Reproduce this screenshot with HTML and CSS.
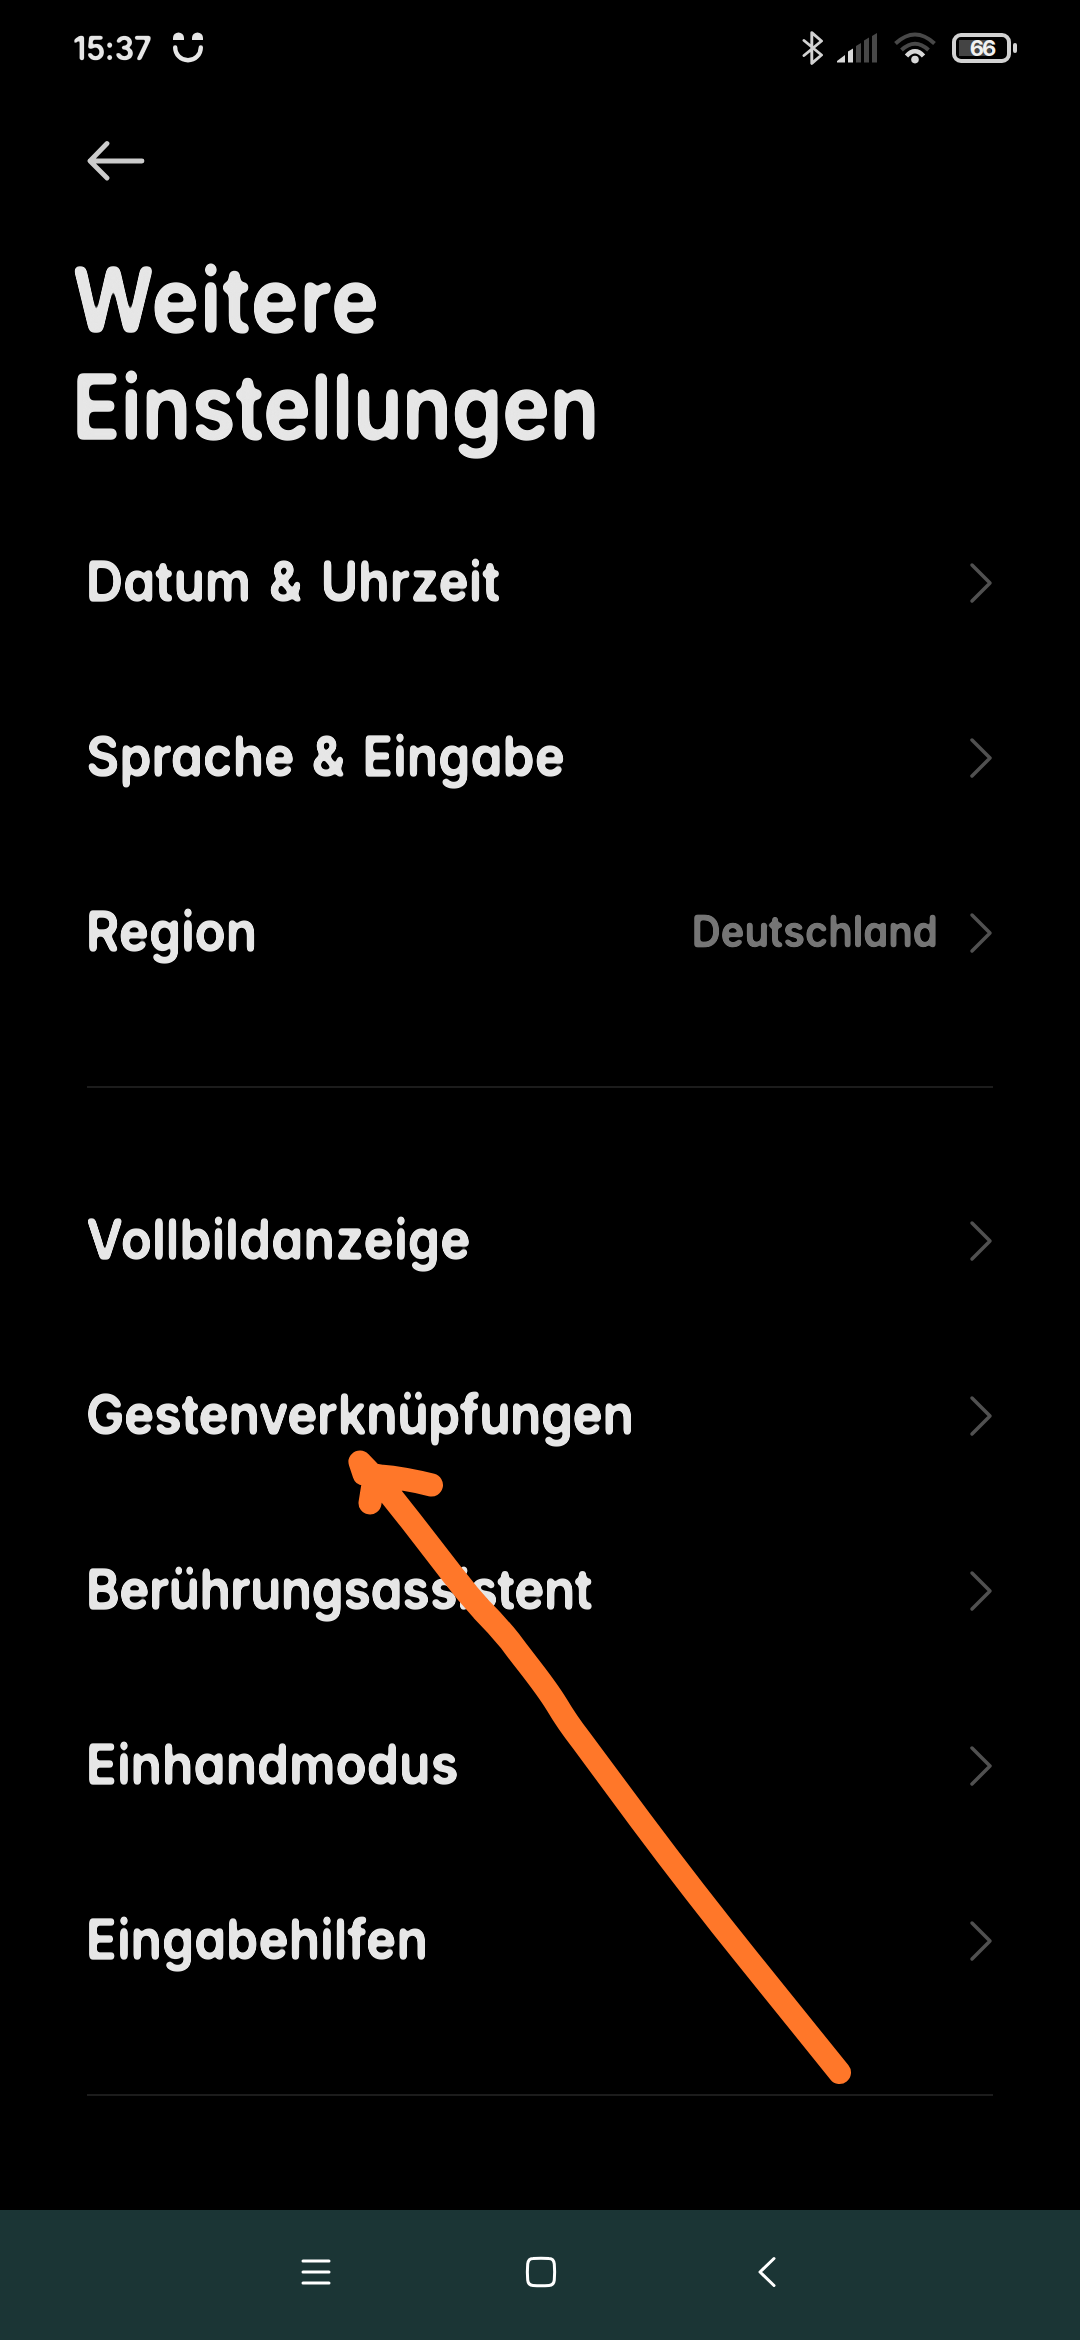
FILE: index.html
```html
<!DOCTYPE html>
<html lang="de">
<head>
<meta charset="utf-8">
<title>Weitere Einstellungen</title>
<link rel="stylesheet" href="styles.css">
</head>
<body>
<!-- Softens the corners of the letters into a rounded typeface -->
<svg class="defs" width="0" height="0">
  <filter id="round-s" color-interpolation-filters="sRGB"><feGaussianBlur stdDeviation="1"/><feComponentTransfer><feFuncA type="linear" slope="3" intercept="-0.8"/></feComponentTransfer></filter>
  <filter id="round-v" color-interpolation-filters="sRGB"><feGaussianBlur stdDeviation="1.5"/><feComponentTransfer><feFuncA type="linear" slope="5" intercept="-1.5"/></feComponentTransfer></filter>
  <filter id="round-m" color-interpolation-filters="sRGB"><feGaussianBlur stdDeviation="1.9"/><feComponentTransfer><feFuncA type="linear" slope="6" intercept="-1.8"/></feComponentTransfer></filter>
  <filter id="round-l" color-interpolation-filters="sRGB"><feGaussianBlur stdDeviation="3"/><feComponentTransfer><feFuncA type="linear" slope="9" intercept="-3.2"/></feComponentTransfer></filter>
</svg>
<div class="screen">
  <header class="status">
    <div class="status-left">
      <span class="time">15:37</span>
      <svg class="smile" width="31" height="31" viewBox="0 0 31 31"><path d="M0 8V6a5.500 5.500 0 0 1 11 0v2zM19 8V6a5.500 5.500 0 0 1 11 0v2z" fill="#e6e6e6"/><path d="M2.200 15.500a12.800 12.800 0 0 0 25.600 0" fill="none" stroke="#e6e6e6" stroke-width="4.400" stroke-linecap="round"/></svg>
    </div>
    <div class="status-right">
      <svg class="bluetooth" width="22" height="34" viewBox="0 0 22 34" fill="none" stroke="#d2d2d2" stroke-width="2.900" stroke-linejoin="round" stroke-linecap="round"><path d="M2 9.500 19.500 24 9.800 32.400V1.600L19.500 10 2 24.500"/></svg>
      <svg class="signal" width="41" height="30" viewBox="0 0 41 30"><path d="M0 29.500V28L8 22V29.500zM11 29.500V18.500L16 15.500V29.500z" fill="#d8d8d8"/><path d="M19 29.500V13L24 10V29.500zM27 29.500V7.500L32 4.500V29.500zM35 29.500V3L40 0V29.500z" fill="#484848"/></svg>
      <svg class="wifi" width="42" height="32" viewBox="0 0 42 32" fill="none" stroke-width="4"><path d="M1.500 11.500Q21-6.500 40.500 11.500M7.500 18Q21 5.500 34.500 18" stroke="#484848"/><path d="M12.500 24Q21 14.500 29.500 24" stroke="#d8d8d8" stroke-width="4.500"/><circle cx="21" cy="27.600" r="3.800" fill="#d8d8d8"/></svg>
      <div class="battery"><span class="battery-level">66</span></div>
      <i class="battery-cap"></i>
    </div>
  </header>

  <svg class="back" width="58" height="42" viewBox="0 0 58 42" fill="none" stroke="#ccc" stroke-width="4.800" stroke-linecap="round" stroke-linejoin="round"><path d="M55 21H3M20 3.500 3 21 20 38"/></svg>
  <h1 class="title"><span class="title-first">Weitere</span><br>Einstellungen</h1>

  <main class="list">
    <section class="group">
      <div class="row"><span class="label datum">Datum &amp; Uhrzeit</span><svg class="chevron" viewBox="0 0 24 42"><path d="M3 3 21 21 3 39"/></svg></div>
      <div class="row"><span class="label sprache">Sprache &amp; Eingabe</span><svg class="chevron" viewBox="0 0 24 42"><path d="M3 3 21 21 3 39"/></svg></div>
      <div class="row"><span class="label region">Region</span><span class="value">Deutschland</span><svg class="chevron" viewBox="0 0 24 42"><path d="M3 3 21 21 3 39"/></svg></div>
    </section>
    <section class="group group-input">
      <div class="row"><span class="label vollbild">Vollbildanzeige</span><svg class="chevron" viewBox="0 0 24 42"><path d="M3 3 21 21 3 39"/></svg></div>
      <div class="row"><span class="label gesten">Gestenverknüpfungen</span><svg class="chevron" viewBox="0 0 24 42"><path d="M3 3 21 21 3 39"/></svg></div>
      <div class="row"><span class="label assistent">Berührungsassistent</span><svg class="chevron" viewBox="0 0 24 42"><path d="M3 3 21 21 3 39"/></svg></div>
      <div class="row"><span class="label einhand">Einhandmodus</span><svg class="chevron" viewBox="0 0 24 42"><path d="M3 3 21 21 3 39"/></svg></div>
      <div class="row"><span class="label hilfen">Eingabehilfen</span><svg class="chevron" viewBox="0 0 24 42"><path d="M3 3 21 21 3 39"/></svg></div>
    </section>
  </main>

  <nav class="nav">
    <svg class="nav-menu" width="30" height="32" viewBox="0 0 30 32" fill="none" stroke="#fff" stroke-width="3" stroke-linecap="round"><path d="M2 5H28M2 16H28M2 27H28"/></svg>
    <svg class="nav-home" width="32" height="32" viewBox="0 0 32 32" fill="none" stroke="#fff" stroke-width="3"><path d="M8 2.500Q16 1.800 24 2.500 28.800 2.700 29.300 8 30 16 29.300 24 28.800 29.300 24 29.500 16 30.200 8 29.500 3.200 29.300 2.700 24 2 16 2.700 8 3.200 2.700 8 2.500z"/></svg>
    <svg class="nav-back" width="20" height="32" viewBox="0 0 20 32" fill="none" stroke="#fff" stroke-width="3" stroke-linecap="round" stroke-linejoin="round"><path d="M17 2.500 3 16 17 29.500"/></svg>
  </nav>

  <svg class="arrow" viewBox="0 0 1080 2340" fill="none" stroke="#ff7729" stroke-width="23" stroke-linecap="round" stroke-linejoin="round"><path d="M839.500 2072.500 748 1959Q694 1892 641 1821L581 1740Q567 1722 557 1705C543 1682 526 1663 510 1641Q497 1625 482 1610L468 1594 452 1574 411 1521 384 1487 360 1462 364 1474Q376 1475 380 1476Q404 1478 431.500 1485M374 1478 370 1503"/></svg>
</div>
</body>
</html>
```
FILE: styles.css
```css
* { box-sizing: border-box; }
body { margin: 0; background: #000; }
.defs { position: absolute; }
.screen {
  position: relative;
  display: flex;
  flex-direction: column;
  width: 1080px;
  height: 2340px;
  overflow: hidden;
  background: #000;
  color: #e6e6e6;
  font-family: Inter, "Noto Sans", sans-serif;
  font-feature-settings: "cv11", "ss03";
  font-weight: 600;
}
.status {
  display: flex;
  justify-content: space-between;
  height: 94px;
  padding: 0 63px 0 73px;
}
.status-left, .status-right { display: flex; align-items: center; padding-top: 1px; }
.status-left { gap: 22px; }
.time {
  width: 78px;
  font-size: 33px;
  letter-spacing: -0.4px;
  white-space: nowrap;
  transform: scaleX(0.94);
  transform-origin: left;
  filter: url(#round-s);
}
.bluetooth { margin-right: 13px; }
.signal { margin-right: 16px; }
.wifi { margin-right: 16px; }
.battery {
  display: flex;
  align-items: center;
  width: 59px;
  height: 30px;
  padding: 3px;
  border: 4px solid #d2d2d2;
  border-radius: 9px;
}
.battery-level {
  width: 100%;
  height: 16px;
  background: linear-gradient(90deg, #444 70%, transparent 70%);
  color: #f0f0f0;
  font-size: 22px;
  font-weight: 700;
  line-height: 16px;
  letter-spacing: -2px;
  text-align: center;
  text-indent: 1px;
}
.battery-cap { width: 4px; height: 10px; margin-left: 2px; border-radius: 2px; background: #d2d2d2; }
.back { flex: none; margin: 46px 0 0 87px; }
.title {
  margin: 64px 0 0 72px;
  font-size: 89px;
  font-weight: 600;
  line-height: 107px;
  letter-spacing: -0.2px;
  transform: scaleX(0.91);
  transform-origin: left;
  filter: url(#round-l);
}
.title-first { letter-spacing: 1px; }
.list { flex: 1; padding: 0 87px; }
.group { padding: 35px 0 66px; border-bottom: 2px solid #1c1c1c; }
.group-input { padding-top: 65px; }
.row {
  display: flex;
  align-items: center;
  height: 175px;
}
.label {
  margin: -3px 0 0 -1px;
  font-size: 55px;
  white-space: nowrap;
  transform: scaleX(0.935);
  transform-origin: left;
  filter: url(#round-m);
}
.datum { word-spacing: 5px; }
.sprache { word-spacing: 4px; }
.region { letter-spacing: -0.1px; }
.vollbild { letter-spacing: 0.2px; }
.gesten { letter-spacing: -0.6px; }
.assistent { letter-spacing: -0.75px; }
.einhand { letter-spacing: 0; }
.hilfen { letter-spacing: 0; }
.value {
  margin: -3px 31px 0 auto;
  color: #757575;
  font-size: 44px;
  letter-spacing: -0.1px;
  transform: scaleX(0.915);
  transform-origin: right;
  filter: url(#round-v);
}
.chevron {
  flex: none;
  width: 24px;
  height: 42px;
  margin-left: auto;
  fill: none;
  stroke: #505050;
  stroke-width: 3.5;
  stroke-linecap: round;
  stroke-linejoin: round;
}
.value + .chevron { margin-left: 0; }
.nav {
  display: flex;
  flex: none;
  align-items: center;
  height: 130px;
  padding: 0 0 6px 301px;
  background: #1b3535;
}
.nav-home { margin: 0 200px 0 194px; }
.arrow { position: absolute; inset: 0; width: 1080px; height: 2340px; }
```
